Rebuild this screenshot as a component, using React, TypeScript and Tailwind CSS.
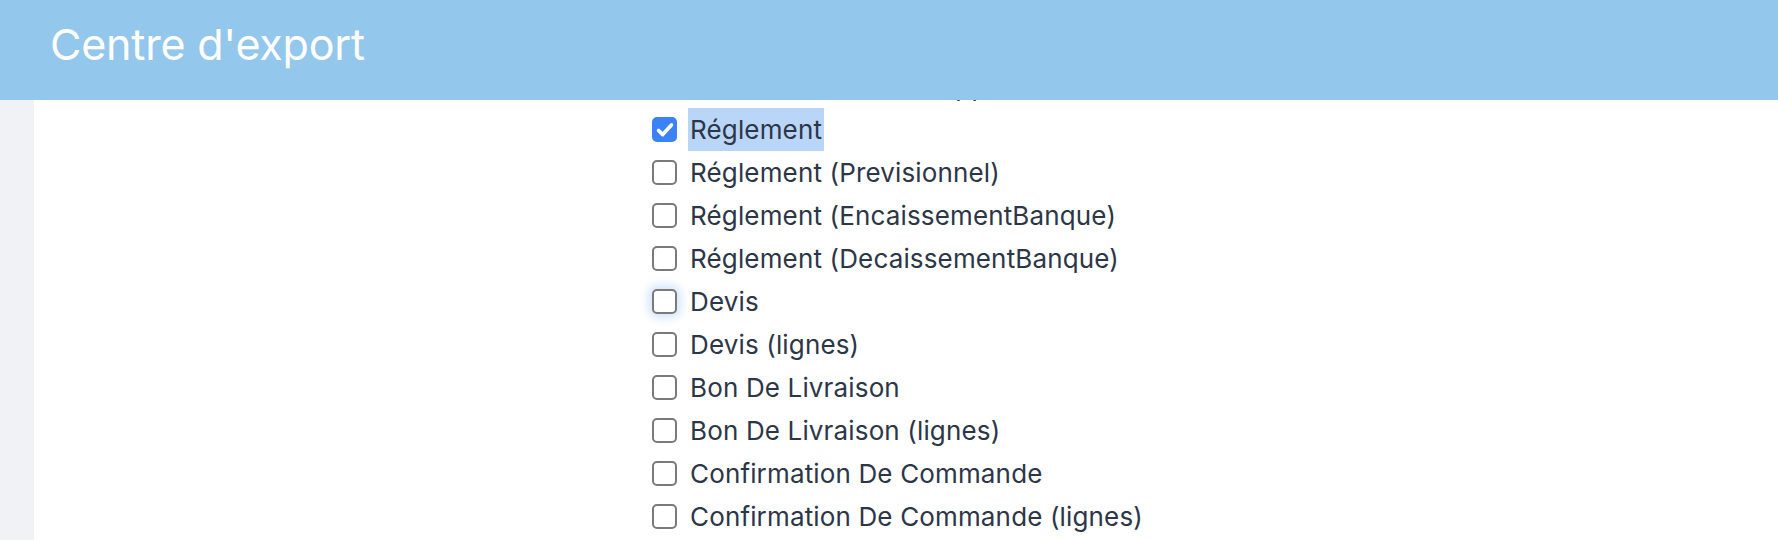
import React from "react";

const items: { label: string; checked?: boolean; highlight?: boolean; focus?: boolean }[] = [
  { label: "Avoir Fournisseur (Rapprochement)" },
  { label: "Réglement", checked: true, highlight: true },
  { label: "Réglement (Previsionnel)" },
  { label: "Réglement (EncaissementBanque)" },
  { label: "Réglement (DecaissementBanque)" },
  { label: "Devis", focus: true },
  { label: "Devis (lignes)" },
  { label: "Bon De Livraison" },
  { label: "Bon De Livraison (lignes)" },
  { label: "Confirmation De Commande" },
  { label: "Confirmation De Commande (lignes)" },
];

function Box({ checked, focus }: { checked?: boolean; focus?: boolean }) {
  if (checked) {
    return (
      <span className="flex h-[25px] w-[25px] shrink-0 items-center justify-center rounded-[5px] bg-[#3b82f6]">
        <svg viewBox="0 0 24 24" className="h-[22px] w-[22px]" fill="none" stroke="white" strokeWidth="4" strokeLinecap="round" strokeLinejoin="round">
          <path d="M5 12.5l4.5 4.5L19 6.5" />
        </svg>
      </span>
    );
  }
  return (
    <span
      className={
        "block h-[25px] w-[25px] shrink-0 rounded-[5px] border-2 border-[#7a7a7a] bg-white" +
        (focus ? " shadow-[0_0_8px_4px_rgba(160,200,245,0.45)]" : "")
      }
    />
  );
}

export default function App() {
  return (
    <div className="flex h-[540px] w-full flex-col overflow-hidden bg-white font-['Inter','Liberation_Sans',sans-serif]">
      <header className="relative z-10 flex h-[100px] shrink-0 items-center bg-[#94c7ec] pb-[12px] pl-[50px]">
        <h1 className="text-[43px] font-normal tracking-[-0.2px] text-white">Centre d'export</h1>
      </header>
      <div className="flex min-h-0 flex-1">
        <aside className="w-[34px] shrink-0 bg-[#f1f2f6]" />
        <main className="min-w-0 flex-1 overflow-hidden pl-[618px]">
          <ul className="mt-[-35px]">
            {items.map((it) => (
              <li key={it.label} className="flex h-[43px] items-center">
                <Box checked={it.checked} focus={it.focus} />
                <span
                  className={
                    "ml-[11px] whitespace-nowrap px-[2px] text-[26px] leading-[43px] tracking-[0.15px] text-[#2c3647]" +
                    (it.highlight ? " bg-[#b9d6f9]" : "")
                  }
                >
                  {it.label}
                </span>
              </li>
            ))}
          </ul>
        </main>
      </div>
    </div>
  );
}
